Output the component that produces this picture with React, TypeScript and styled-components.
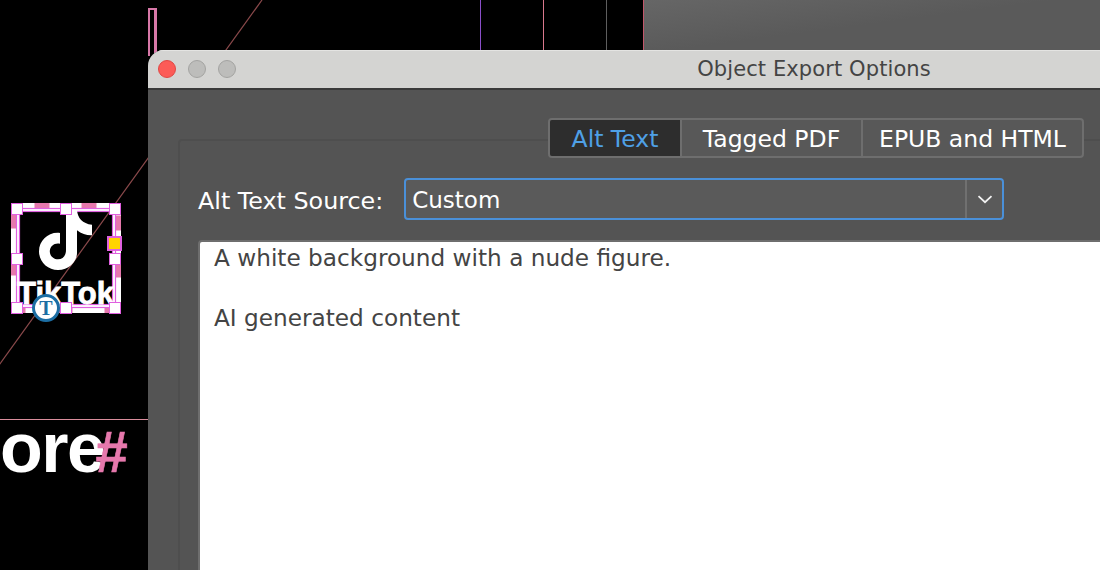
import styled, { createGlobalStyle } from 'styled-components';

const GlobalStyle = createGlobalStyle`
  html, body {
    margin: 0;
    padding: 0;
    background: #000;
    font-family: "DejaVu Sans", "Liberation Sans", sans-serif;
  }
`;

const guides = [
  { x: 480, color: '#8a4fc9' },
  { x: 543, color: '#d9788c' },
  { x: 606, color: '#5e5e5e' },
  { x: 643, color: '#c4566a' },
];

// 3x3 grid of frame handles, the centre cell stays empty
const handleCells = [true, true, true, true, false, true, true, true, true];

const App = () => {
  return (
    <>
      <GlobalStyle />
      <Canvas>
        <Pasteboard />
        {guides.map((g) => (
          <Guide key={g.x} $x={g.x} $color={g.color} />
        ))}
        <PinkSliver />
        <Diagonal viewBox="0 0 270 370" width="270" height="370">
          <path d="M262 0 L-3 368" stroke="#8c4a4c" strokeWidth="1.2" fill="none" />
        </Diagonal>

        <Logo>
          <FrameArt viewBox="0 0 112 112" width="112" height="112">
            <rect x="3.500" y="3.500" width="105" height="105" fill="none" stroke="#fff" strokeWidth="5" />
            <rect
              x="3.500"
              y="3.500"
              width="105"
              height="105"
              fill="none"
              stroke="#e678ac"
              strokeWidth="5"
              strokeDasharray="15 32"
              strokeDashoffset="-21"
            />
            <rect x="8" y="8" width="96" height="96" fill="none" stroke="#fff" strokeWidth="2" />
            <rect x="6.500" y="6.500" width="99" height="99" fill="none" stroke="#e060e0" strokeWidth="1.200" />
            <rect x="9.500" y="9.500" width="93" height="93" fill="none" stroke="#e060e0" strokeWidth="1.200" />
            <path
              fill="#fff"
              d="M56 8h11c.6 8 5.400 13.600 15 14.800v10.400c-5.400.2-10.500-1.500-15-5v22.800C67 60 58.500 68 48 68 37.500 68 29 59.800 29 49.400 29 38.200 38.800 29.500 50 31v10.800c-5-1.400-10.200 2.200-10.200 7.500 0 4.600 3.600 8 8.200 8 4.800 0 8-3.600 8-9.300z"
            />
          </FrameArt>
          <LogoWord>TikTok</LogoWord>
          <HandleGrid>
            {handleCells.map((on, i) => (on ? <Handle key={i} /> : <span key={i} />))}
          </HandleGrid>
          <PortHandle />
          <TextBadge>T</TextBadge>
        </Logo>

        <Rule />
        <BigWord>
          ore<Hash>#</Hash>
        </BigWord>

        <DialogWindow>
          <TitleBar>
            <Lights>
              <Light $color="#fc5b57" $edge="#df4744" />
              <Light $color="#bdbdbb" $edge="#a3a3a1" />
              <Light $color="#bdbdbb" $edge="#a3a3a1" />
            </Lights>
            <Title>Object Export Options</Title>
          </TitleBar>
          <DialogBody>
            <Group>
              <Tabs>
                <Tab $active $width={130}>Alt Text</Tab>
                <Tab $width={181}>Tagged PDF</Tab>
                <Tab $width={221}>EPUB and HTML</Tab>
              </Tabs>
              <SourceRow>
                <SourceLabel>Alt Text Source:</SourceLabel>
                <Select>
                  <SelectValue>Custom</SelectValue>
                  <SelectArrow>
                    <svg viewBox="0 0 16 9" width="16" height="9">
                      <path d="M1.500 1.200 L8 7.200 L14.500 1.200" stroke="#f2f2f2" strokeWidth="1.800" fill="none" />
                    </svg>
                  </SelectArrow>
                </Select>
              </SourceRow>
              <AltTextArea>
                <AltLine>A white background with a nude figure.</AltLine>
                <AltLine>&nbsp;</AltLine>
                <AltLine>AI generated content</AltLine>
              </AltTextArea>
            </Group>
          </DialogBody>
        </DialogWindow>
      </Canvas>
    </>
  );
};

const Canvas = styled.div`
  position: relative;
  width: 1100px;
  height: 570px;
  overflow: hidden;
  background: #000;
`;

const Pasteboard = styled.div`
  position: absolute;
  left: 643px;
  top: 0;
  width: 457px;
  height: 60px;
  background: linear-gradient(to bottom right, #666666, #5a5a5a 45%);
`;

const Guide = styled.div<{ $x: number; $color: string }>`
  position: absolute;
  left: ${(p) => p.$x}px;
  top: 0;
  width: 1px;
  height: 50px;
  background: ${(p) => p.$color};
`;

const PinkSliver = styled.div`
  position: absolute;
  left: 148px;
  top: 8px;
  width: 9px;
  height: 48px;
  box-sizing: border-box;
  border: 2px solid #d878a8;
  border-right-width: 3px;
  border-bottom: none;
`;

const Diagonal = styled.svg`
  position: absolute;
  left: 0;
  top: 0;
  overflow: visible;
`;

const Logo = styled.div`
  position: absolute;
  left: 10px;
  top: 202px;
  width: 112px;
  height: 112px;
`;

const FrameArt = styled.svg`
  position: absolute;
  left: 0;
  top: 0;
`;

const LogoWord = styled.div`
  position: absolute;
  left: 7px;
  top: 74px;
  font-family: "Liberation Sans", Arial, sans-serif;
  font-size: 31px;
  font-weight: 700;
  line-height: 36px;
  -webkit-text-stroke: 0.8px #fff;
  color: #fff;
  white-space: nowrap;
`;

const HandleGrid = styled.div`
  position: absolute;
  inset: 1px 1px 0 1px;
  display: grid;
  grid-template-columns: repeat(3, 12px);
  grid-template-rows: repeat(3, 12px);
  justify-content: space-between;
  align-content: space-between;
`;

const Handle = styled.div`
  box-sizing: border-box;
  background: #fff;
  border: 1px solid #e060e0;
`;

const PortHandle = styled.div`
  position: absolute;
  left: 97px;
  top: 34px;
  width: 15px;
  height: 15px;
  box-sizing: border-box;
  background: #ffd400;
  border: 2px solid #e060e0;
`;

const TextBadge = styled.div`
  position: absolute;
  left: 22px;
  top: 92px;
  width: 28px;
  height: 28px;
  box-sizing: border-box;
  border-radius: 50%;
  background: #fff;
  border: 3px solid #1c6ea4;
  color: #1c6ea4;
  font-family: "Liberation Serif", serif;
  font-weight: 700;
  font-size: 20px;
  line-height: 22px;
  text-align: center;
`;

const Rule = styled.div`
  position: absolute;
  left: 0;
  top: 419px;
  width: 148px;
  height: 1px;
  background: #d98d9c;
`;

const BigWord = styled.div`
  position: absolute;
  left: 0;
  top: 411px;
  font-family: "Liberation Sans", Arial, sans-serif;
  font-size: 70px;
  font-weight: 700;
  line-height: 74px;
  letter-spacing: -1.500px;
  color: #fff;
  white-space: nowrap;
`;

const Hash = styled.span`
  color: #e678ac;
  font-size: 58px;
  letter-spacing: 0;
  margin-left: -9px;
  -webkit-text-stroke: 0.6px #e678ac;
`;

const DialogWindow = styled.div`
  position: absolute;
  left: 148px;
  top: 50px;
  width: 1332px;
  height: 640px;
  display: flex;
  flex-direction: column;
  border-radius: 16px 16px 0 0;
  overflow: hidden;
  background: #555;
`;

const TitleBar = styled.div`
  position: relative;
  flex: none;
  height: 40px;
  box-sizing: border-box;
  display: flex;
  align-items: center;
  justify-content: center;
  padding-bottom: 2px;
  background: #d4d4d2;
  border-top: 1px solid #e4e4e2;
  border-bottom: 2px solid #3a3a3a;
`;

const Lights = styled.div`
  position: absolute;
  left: 10px;
  top: 9px;
  display: flex;
  gap: 12px;
`;

const Light = styled.span<{ $color: string; $edge: string }>`
  width: 18px;
  height: 18px;
  box-sizing: border-box;
  border-radius: 50%;
  background: ${(p) => p.$color};
  border: 1px solid ${(p) => p.$edge};
`;

const Title = styled.div`
  font-size: 21px;
  color: #444;
  letter-spacing: 0.1px;
`;

const DialogBody = styled.div`
  flex: 1;
  padding: 49px 0 0 30px;
  background: #545454;
`;

const Group = styled.div`
  height: 100%;
  box-sizing: border-box;
  padding: 0 20px 0 18px;
  border: 2px solid #4e4e4e;
  border-radius: 4px;
`;

const Tabs = styled.div`
  display: flex;
  width: fit-content;
  margin: -23px 0 0 350px;
  border: 2px solid #6e6e6e;
  border-radius: 4px;
  background: #585858;
  overflow: hidden;
`;

const Tab = styled.div<{ $active?: boolean; $width: number }>`
  width: ${(p) => p.$width}px;
  height: 36px;
  box-sizing: border-box;
  display: flex;
  align-items: center;
  justify-content: center;
  padding-top: 2px;
  font-size: 23.500px;
  color: ${(p) => (p.$active ? '#4fa0e6' : '#fff')};
  background: ${(p) => (p.$active ? '#2d2d2d' : 'transparent')};
  & + & {
    border-left: 2px solid #6e6e6e;
  }
`;

const SourceRow = styled.div`
  display: flex;
  align-items: center;
  gap: 21px;
  margin-top: 20px;
`;

const SourceLabel = styled.div`
  padding-top: 3px;
  font-size: 23.800px;
  color: #fff;
`;

const Select = styled.div`
  width: 600px;
  height: 42px;
  box-sizing: border-box;
  display: flex;
  border: 2px solid #4a90d9;
  border-radius: 4px;
  background: #5a5a5a;
`;

const SelectValue = styled.div`
  flex: 1;
  display: flex;
  align-items: center;
  padding: 2px 0 0 6px;
  font-size: 23px;
  color: #fff;
`;

const SelectArrow = styled.div`
  width: 35px;
  display: flex;
  align-items: center;
  justify-content: center;
  border-left: 2px solid #707070;
`;

const AltTextArea = styled.div`
  margin-top: 20px;
  height: 500px;
  box-sizing: border-box;
  padding: 1px 14px 0;
  background: #fff;
  border: 2px solid #6e6e6e;
  border-radius: 4px;
`;

const AltLine = styled.div`
  font-size: 23.200px;
  line-height: 30px;
  color: #444;
  white-space: nowrap;
`;

export default App;
